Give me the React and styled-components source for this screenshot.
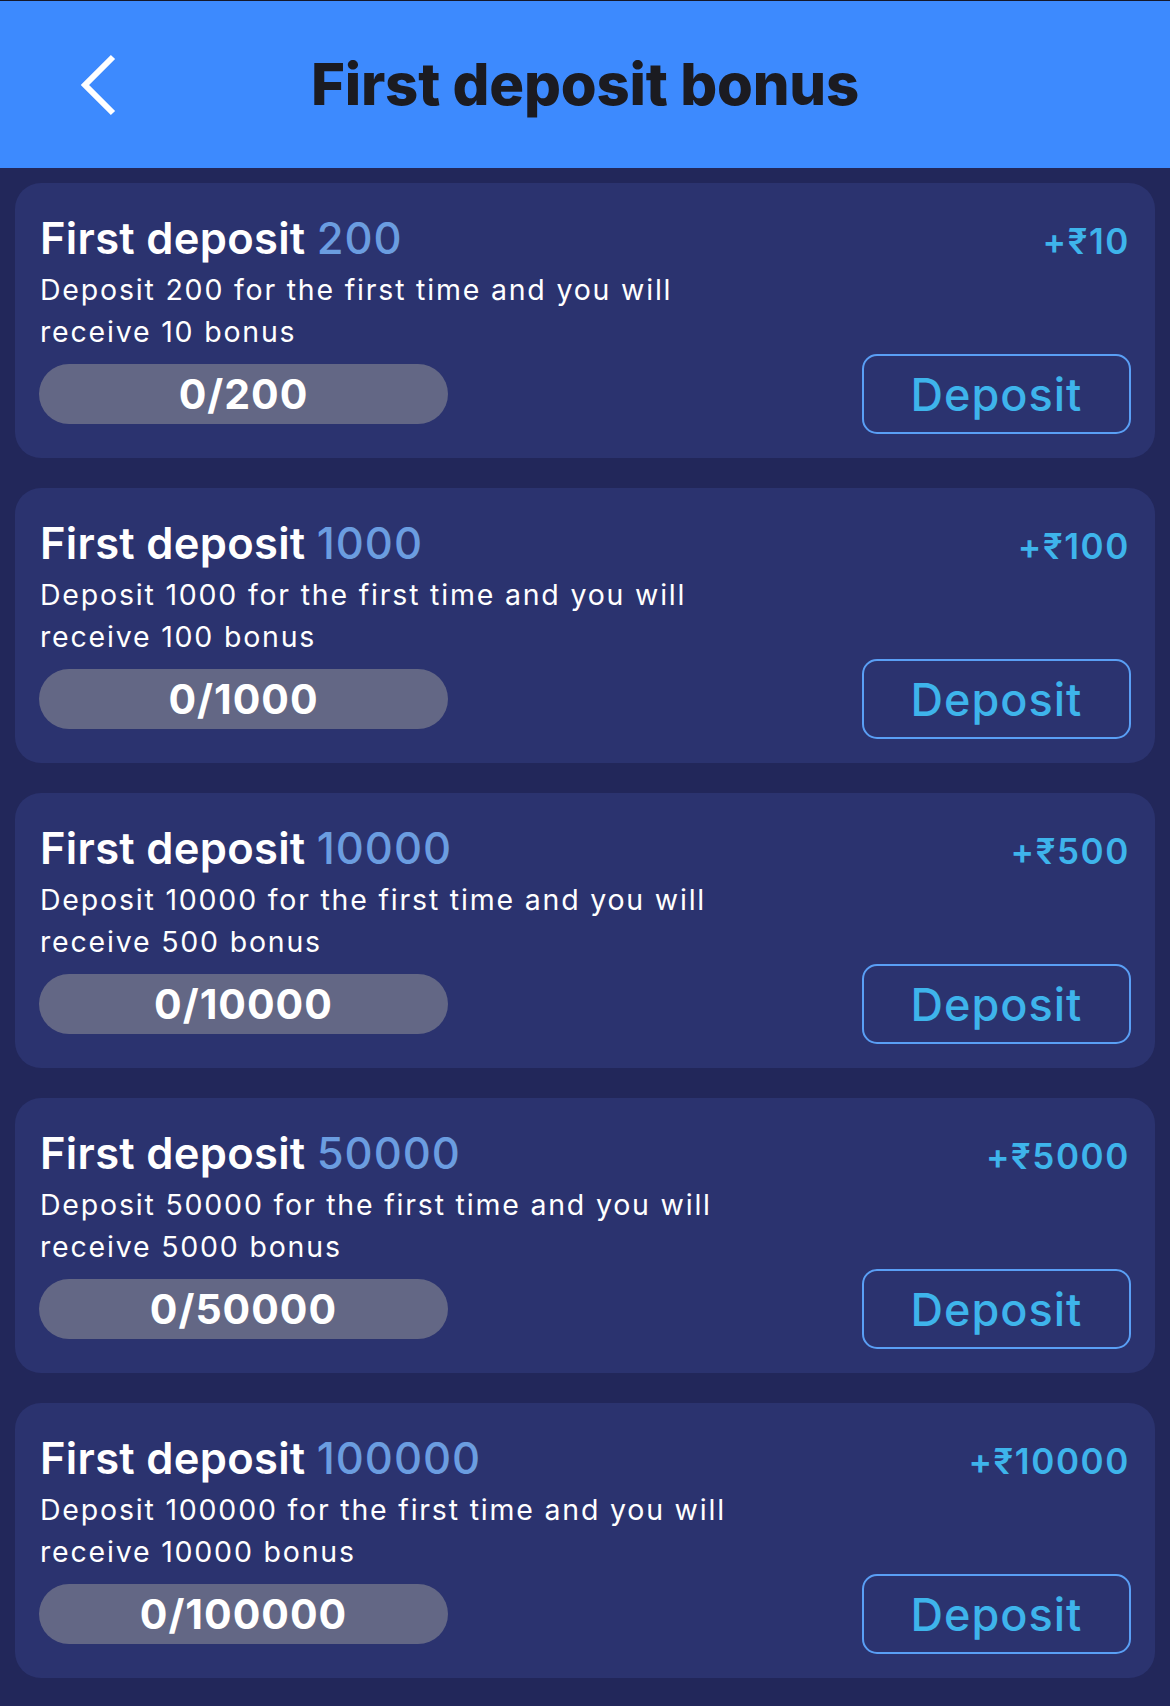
import React from 'react'
import styled, { createGlobalStyle } from 'styled-components'

const bonuses = [
  { amount: 200, bonus: 10 },
  { amount: 1000, bonus: 100 },
  { amount: 10000, bonus: 500 },
  { amount: 50000, bonus: 5000 },
  { amount: 100000, bonus: 10000 },
]

function BonusCard({ amount, bonus }) {
  return (
    <Card>
      <TopRow>
        <Title>
          First deposit <Amount>{amount}</Amount>
        </Title>
        <Reward>+₹{bonus}</Reward>
      </TopRow>
      <Desc>
        Deposit {amount} for the first time and you will
        <br />
        receive {bonus} bonus
      </Desc>
      <BottomRow>
        <Progress>0/{amount}</Progress>
        <DepositBtn>Deposit</DepositBtn>
      </BottomRow>
    </Card>
  )
}

export default function App() {
  return (
    <>
      <Global />
      <Page>
        <Header>
          <Back aria-label="back">
            <svg width="38" height="64" viewBox="0 0 38 64" fill="none">
              <path d="M34 4 L6 32 L34 60" stroke="#fff" strokeWidth="6" strokeLinecap="butt" strokeLinejoin="miter" />
            </svg>
          </Back>
          <HeaderTitle>First deposit bonus</HeaderTitle>
        </Header>
        <List>
          {bonuses.map(b => (
            <BonusCard key={b.amount} {...b} />
          ))}
        </List>
      </Page>
    </>
  )
}

const Global = createGlobalStyle`
body{
  margin:0;
  background:#22275a;
  font-family:Inter, "Noto Sans", "DejaVu Sans", sans-serif;
}
`
const Page = styled.div`
width:1170px;
min-height:1706px;
background:#22275a;
`
const Header = styled.div`
height:167px;
border-top:1px solid #15182a;
background:#3d8afe;
display:flex;
align-items:center;
justify-content:center;
position:relative;
`
const Back = styled.div`
position:absolute;
left:79px;
top:52px;
display:flex;
`
const HeaderTitle = styled.h1`
margin:0;
font-size:58px;
font-weight:800;
letter-spacing:-0.2px;
color:#1b1b21;
padding-bottom:2px;
`
const List = styled.div`
display:flex;
flex-direction:column;
gap:30px;
padding:15px 15px 27px;
`
const Card = styled.div`
height:275px;
box-sizing:border-box;
background:#2b336f;
border-radius:26px;
padding:30px 24px 24px 24px;
display:flex;
flex-direction:column;
`
const TopRow = styled.div`
display:flex;
justify-content:space-between;
align-items:baseline;
height:51px;
`
const Title = styled.div`
font-size:43.5px;
line-height:51px;
font-weight:600;
color:#fff;
padding-left:1px;
letter-spacing:0.3px;
`
const Amount = styled.span`
font-weight:500;
color:#6b9de0;
letter-spacing:1px;
`
const Reward = styled.div`
font-size:35px;
font-weight:600;
color:#3eb4eb;
letter-spacing:1.6px;
padding-right:1px;
`
const Desc = styled.p`
margin:5px 0 0;
font-size:28.5px;
line-height:42px;
color:#fff;
letter-spacing:1.8px;
padding-left:1px;
`
const BottomRow = styled.div`
display:flex;
justify-content:space-between;
align-items:center;
margin-top:1px;
`
const Progress = styled.div`
width:409px;
height:60px;
border-radius:30px;
background:#636785;
color:#fff;
font-size:41px;
font-weight:700;
letter-spacing:1px;
display:flex;
align-items:center;
justify-content:center;
`
const DepositBtn = styled.button`
width:269px;
height:80px;
box-sizing:border-box;
border:2.5px solid #5a9ff5;
border-radius:15px;
background:transparent;
color:#3eb4eb;
font-family:inherit;
font-size:45px;
font-weight:500;
letter-spacing:1px;
padding:0;
`
